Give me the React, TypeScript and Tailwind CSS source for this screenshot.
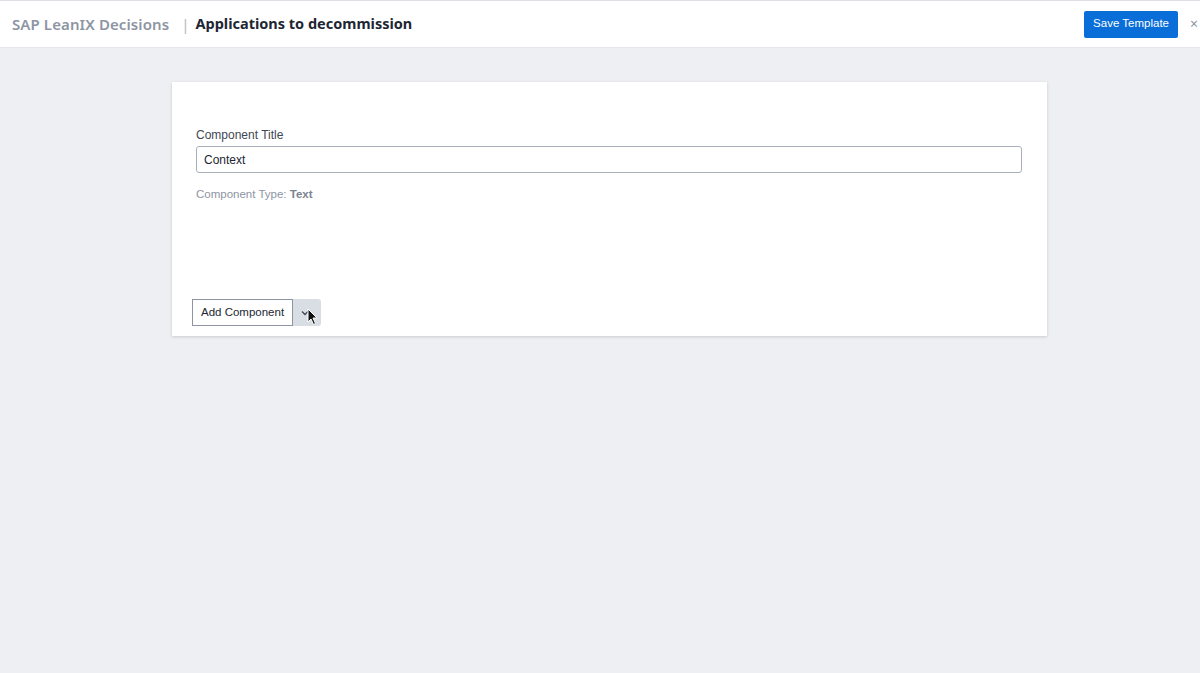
import React from "react";

export default function App() {
  return (
    <div
      className="w-full h-[673px] bg-[#edeff3] flex flex-col"
      style={{ fontFamily: '"Noto Sans", "Liberation Sans", sans-serif' }}
    >
      <header className="h-[48px] shrink-0 bg-white border-t border-t-[#dcdfe4] border-b border-b-[#e3e6eb] flex items-center pl-3 pr-[2px]">
        <span className="text-[15px] font-semibold text-[#8d95a3] tracking-[0.1px]">SAP LeanIX Decisions</span>
        <span className="ml-[12px] mr-[6px] text-[15px] text-[#b3b9c2]">|</span>
        <span className="text-[14.5px] font-bold text-[#1d2633]">Applications to decommission</span>
        <div className="ml-auto flex items-center gap-[12px]">
          <button className="h-[27px] px-[9px] rounded-[2px] bg-[#0a6ed9] text-white text-[11.5px] leading-none font-['Liberation_Sans',sans-serif]">
            Save Template
          </button>
          <span className="text-[14px] text-[#8d95a3] leading-none">×</span>
        </div>
      </header>

      <main className="pt-[34px] pl-[172px]">
        <section className="w-[875px] bg-white shadow-[0_1px_3px_rgba(0,0,0,0.15)] flex flex-col pt-[45px] pb-[10px] font-['Liberation_Sans',sans-serif]">
          <div className="px-[24px] pr-[25px] flex flex-col">
            <label className="text-[12px] text-[#3f4754] leading-[16px]">Component Title</label>
            <div className="mt-[3px] h-[27px] border border-[#a9b0bb] rounded-[3px] flex items-center px-[7px] text-[12px] text-[#1d2633]">
              Context
            </div>
            <p className="mt-[13px] text-[11.5px] text-[#8d95a3]">
              Component Type: <span className="font-bold text-[#7b8390]">Text</span>
            </p>
          </div>
          <div className="mt-[96px] px-[20px] flex items-stretch">
            <button className="h-[27px] px-[8px] bg-white border border-[#8d95a3] text-[11.5px] text-[#1d2633]">
              Add Component
            </button>
            <div className="relative w-[28px] h-[27px] bg-[#d9dde4] rounded-r-[3px] flex items-center justify-center">
              <svg width="8" height="6" viewBox="0 0 8 6" className="mr-[4px]">
                <path d="M1 1.5 L4 4.5 L7 1.5" stroke="#3f4754" strokeWidth="1.3" fill="none" />
              </svg>
              <svg width="12" height="18" viewBox="0 0 12 18" className="absolute left-[14px] top-[9px]">
                <path d="M1 1 L1 14 L4 11 L6.5 16.5 L8.5 15.5 L6 10 L10 10 Z" fill="#111" stroke="#fff" strokeWidth="1" />
              </svg>
            </div>
          </div>
        </section>
      </main>
    </div>
  );
}
